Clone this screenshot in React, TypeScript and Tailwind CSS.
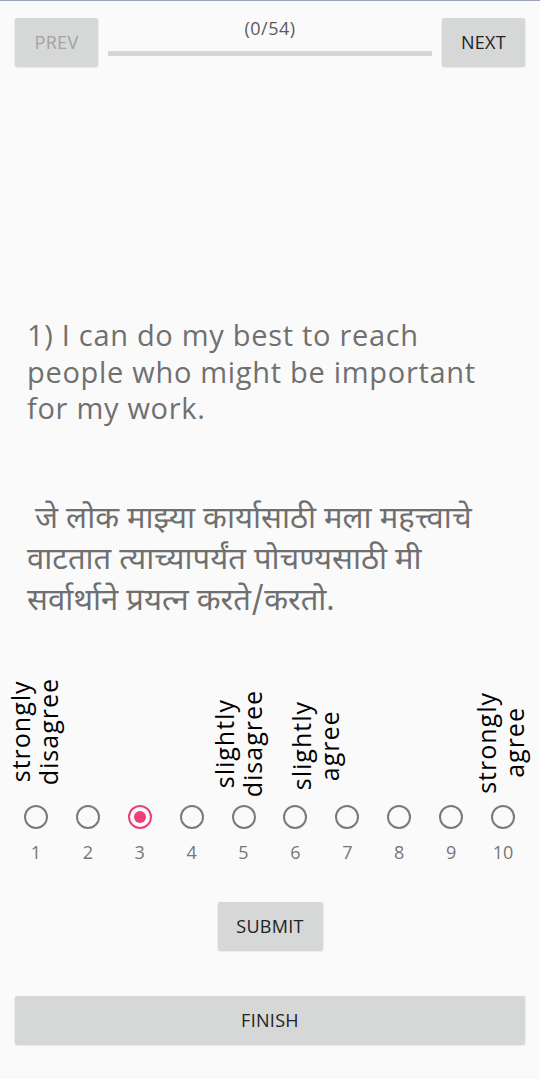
import React from "react";

const labels: Record<number, { lines: [string, string]; mb: string; dx: string }> = {
  1: { lines: ["strongly", "disagree"], mb: "mb-[20px]", dx: "translate-x-[-2px]" },
  5: { lines: ["slightly", "disagree"], mb: "mb-[8px]", dx: "translate-x-[-6px]" },
  6: { lines: ["slightly", "agree"], mb: "mb-[15px]", dx: "translate-x-[20px]" },
  10: { lines: ["strongly", "agree"], mb: "mb-[11px]", dx: "translate-x-[-3px]" },
};

function Radio({ checked }: { checked: boolean }) {
  if (checked) {
    return (
      <div className="w-[24px] h-[24px] rounded-full border-[2px] border-[#ec407a] flex items-center justify-center">
        <div className="w-[12px] h-[12px] rounded-full bg-[#ec407a]" />
      </div>
    );
  }
  return <div className="w-[24px] h-[24px] rounded-full border-[2px] border-[#7a7a7a]" />;
}

const btn =
  "h-[48px] bg-[#d6d7d7] rounded-[2px] text-[18px] shadow-[0_1px_2px_rgba(0,0,0,0.2)] tracking-[0.3px]";

export default function App() {
  const font = { fontFamily: '"Open Sans", "Noto Sans", sans-serif' };
  return (
    <div className="w-[540px] h-[1079px] bg-[#fafafa] border-t border-[#9aa6b8] overflow-hidden flex flex-col" style={font}>
      {/* top bar */}
      <div className="h-[66px] shrink-0 flex items-start px-[15px] pt-[17px]">
        <button className={`${btn} w-[83px] text-[#a3a3a3]`}>PREV</button>
        <div className="flex-1 flex flex-col items-center px-[10px]">
          <div className="text-[18px] tracking-[0.5px] text-[#5a5a5a] leading-[24px] mt-[-2px]">(0/54)</div>
          <div className="w-full h-[5px] bg-[#d5d5d5] mt-[11px]" />
        </div>
        <button className={`${btn} w-[83px] text-[#222]`}>NEXT</button>
      </div>

      {/* question */}
      <div className="h-[603px] shrink-0 px-[27px] pt-[250px] text-[29px] text-[#707070]">
        <p className="leading-[36.5px] tracking-[0.7px]">
          1) I can do my best to reach people who might be important for my work.
        </p>
        <p
          className="leading-[41px] mt-[73px] text-[31px] text-[#6f6f6f]"
          style={{ fontFamily: '"Noto Sans Devanagari", "Noto Sans", sans-serif' }}
        >
          &nbsp;जे लोक माझ्या कार्यासाठी मला महत्त्वाचे वाटतात त्याच्यापर्यंत पोचण्यसाठी मी सर्वार्थाने प्रयत्न करते/करतो.
        </p>
      </div>

      {/* scale */}
      <div className="flex pl-[10px] pr-[11px]">
        {Array.from({ length: 10 }, (_, i) => i + 1).map((n) => {
          const l = labels[n];
          return (
            <div key={n} className="w-[51.9px] shrink-0 min-w-0 flex flex-col items-center">
              <div className="h-[135px] w-full flex items-end justify-center">
                {l && (
                  <div
                    className={`[writing-mode:vertical-rl] rotate-180 text-center text-[25px] tracking-[1px] leading-[28px] text-black whitespace-nowrap ${l.mb} ${l.dx}`}
                  >
                    {l.lines[0]}
                    <br />
                    {l.lines[1]}
                  </div>
                )}
              </div>
              <Radio checked={n === 3} />
              <div className="mt-[12px] text-[18px] leading-[22px] text-[#777]">{n}</div>
            </div>
          );
        })}
      </div>

      <div className="flex flex-col items-center mt-[39px]">
        <button className={`${btn} w-[105px] text-[#222]`}>SUBMIT</button>
        <button className={`${btn} mt-[46px] w-[510px] text-[#222]`}>FINISH</button>
      </div>
    </div>
  );
}
